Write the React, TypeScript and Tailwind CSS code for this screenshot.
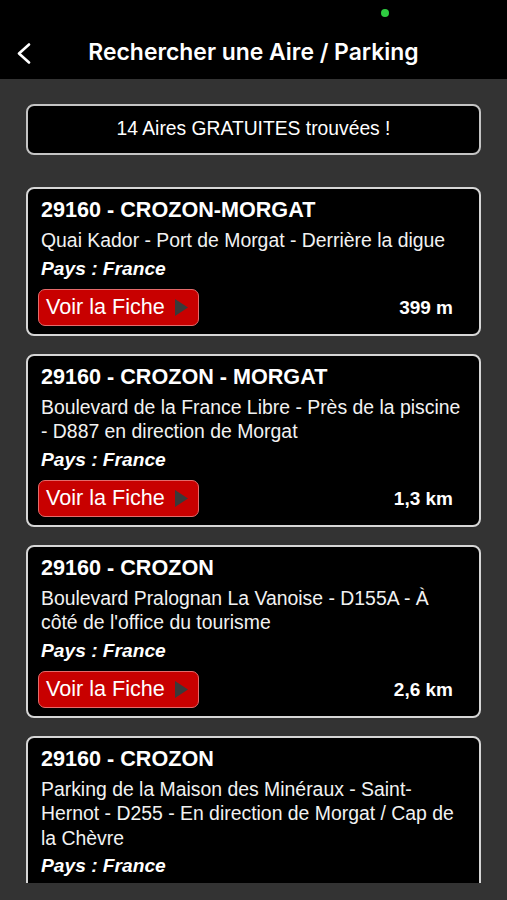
import React from "react";

type Item = { title: string; address: string; distance: string; button?: boolean };

const items: Item[] = [
  { title: "29160 - CROZON-MORGAT", address: "Quai Kador - Port de Morgat - Derrière la digue", distance: "399 m", button: true },
  { title: "29160 - CROZON - MORGAT", address: "Boulevard de la France Libre - Près de la piscine - D887 en direction de Morgat", distance: "1,3 km", button: true },
  { title: "29160 - CROZON", address: "Boulevard Pralognan La Vanoise - D155A - À côté de l'office du tourisme", distance: "2,6 km", button: true },
  { title: "29160 - CROZON", address: "Parking de la Maison des Minéraux - Saint-Hernot - D255 - En direction de Morgat / Cap de la Chèvre", distance: "3,1 km", button: false },
];

function Card({ item }: { item: Item }) {
  return (
    <div className="shrink-0 rounded-[8px] border-2 border-[#d6d6d6] bg-black pl-[13px] pr-[10px] pt-[6px] pb-[8px] text-white">
      <div className="text-[21.6px] font-bold leading-[30px]">{item.title}</div>
      <div className="mt-[3px] text-[19.4px] leading-[24.5px] text-[#f2f2f2]">{item.address}</div>
      <div className="mt-[2px] text-[19.2px] font-bold italic leading-[28px]">Pays : France</div>
      {item.button ? (
        <div className="mt-[6px] flex items-center justify-between">
          <div className="-ml-[3px] flex h-[37px] w-[161px] items-center rounded-[7px] border border-[#e46a6a] bg-[#c80000] pl-[7px]">
            <span className="text-[21.6px] leading-none text-white">Voir la Fiche</span>
            <svg width="13" height="17" viewBox="0 0 13 17" className="ml-[10px]">
              <polygon points="0,0 13,8.5 0,17" fill="#3a3a3a" />
            </svg>
          </div>
          <div className="mr-[16px] text-[19px] font-bold leading-none">{item.distance}</div>
        </div>
      ) : (
        <div className="h-[43px]" />
      )}
    </div>
  );
}

export default function App() {
  return (
    <div className="flex h-[900px] w-[507px] flex-col overflow-hidden bg-[#333333]" style={{ fontFamily: '"Liberation Sans", Arial, sans-serif' }}>
      <header className="relative flex h-[79px] shrink-0 items-center justify-center bg-black">
        <div className="absolute left-[381px] top-[9px] h-[8px] w-[8px] rounded-full bg-[#2ecc40]" />
        <svg className="absolute left-[16px] top-[43px]" width="16" height="21" viewBox="0 0 16 21">
          <polyline points="13,1.5 3,10.5 13,19.5" fill="none" stroke="white" strokeWidth="2.6" strokeLinecap="round" strokeLinejoin="round" />
        </svg>
        <h1 className="mt-[26px] text-[22.9px] font-semibold text-white" style={{ fontFamily: 'Inter, "Liberation Sans", sans-serif' }}>
          Rechercher une Aire / Parking
        </h1>
      </header>
      <main className="flex h-[804px] shrink-0 flex-col overflow-hidden px-[26px] pt-[25px]">
        <div className="flex h-[51px] shrink-0 items-center justify-center rounded-[8px] border-2 border-[#c4c4c4] bg-black text-[19.3px] text-white">
          14 Aires GRATUITES trouvées !
        </div>
        <div className="mt-[32px] flex flex-col gap-[18px]">
          {items.map((it, i) => (
            <Card key={i} item={it} />
          ))}
        </div>
      </main>
    </div>
  );
}
